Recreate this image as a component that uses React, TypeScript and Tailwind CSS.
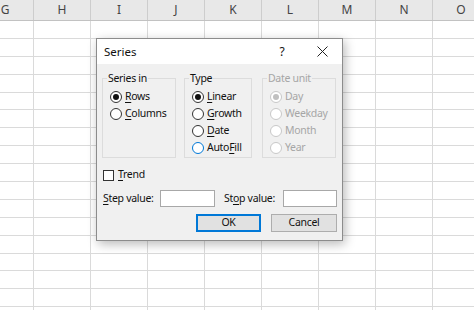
import React from 'react';

const cols = ['G', 'H', 'I', 'J', 'K', 'L', 'M', 'N', 'O'];
const rows = Array.from({ length: 17 }, (_, i) => i);

const Acc: React.FC<{ children: React.ReactNode }> = ({ children }) => (
  <span className="underline underline-offset-[2px] decoration-[1px]">{children}</span>
);

interface RadioProps {
  checked?: boolean;
  disabled?: boolean;
  focus?: boolean;
  children: React.ReactNode;
}

const Radio: React.FC<RadioProps> = ({ checked, disabled, focus, children }) => {
  const ring = disabled ? 'border-[#c8c8c8]' : focus ? 'border-[#0078d7]' : 'border-[#333]';
  return (
    <div className={`flex items-center h-[17px] ${disabled ? 'text-[#a6a6a6]' : 'text-[#111]'}`}>
      <div className={`w-[12px] h-[12px] shrink-0 rounded-full border bg-white flex items-center justify-center ${ring}`}>
        {checked && <div className={`w-[6px] h-[6px] rounded-full ${disabled ? 'bg-[#c0c0c0]' : 'bg-[#111]'}`} />}
      </div>
      <span className="ml-[3px]">{children}</span>
    </div>
  );
};

const Group: React.FC<{ label: string; width: string; disabled?: boolean; children: React.ReactNode }> = ({
  label,
  width,
  disabled,
  children,
}) => (
  <fieldset className={`${width} h-[87px] border border-[#dcdcdc] px-[4px]`}>
    <legend className={`px-[1px] leading-[14px] ${disabled ? 'text-[#a6a6a6]' : 'text-[#111]'}`}>{label}</legend>
    <div className="ml-[3px] mt-[3px]">{children}</div>
  </fieldset>
);

const SeriesDialog: React.FC = () => (
  <div className="absolute left-[96px] top-[38px] w-[247px] h-[203px] border border-[#8c8c8c] bg-[#f0f0f0] shadow-[2px_3px_10px_rgba(0,0,0,0.28)] text-[10.5px] tracking-[-0.3px] text-[#111]">
    {/* title bar */}
    <div className="h-[25px] bg-white flex items-center">
      <span className="pl-[7px] text-[11.5px] tracking-normal">Series</span>
      <span className="ml-auto w-[16px] text-center text-[12px]">?</span>
      <div className="ml-[20px] mr-[8px] w-[24px] flex items-center justify-center">
        <svg width="11" height="11" viewBox="0 0 11 11">
          <path d="M0.5 0.5 L10.5 10.5 M10.5 0.5 L0.5 10.5" stroke="#222" strokeWidth="1" />
        </svg>
      </div>
    </div>

    <div className="pl-[5px] pr-[5px] pt-[7px]">
      <div className="flex">
        <Group label="Series in" width="w-[74px]">
          <Radio checked>
            <Acc>R</Acc>ows
          </Radio>
          <Radio>
            <Acc>C</Acc>olumns
          </Radio>
        </Group>
        <div className="ml-[8px]">
          <Group label="Type" width="w-[68px]">
            <Radio checked>
              <Acc>L</Acc>inear
            </Radio>
            <Radio>
              <Acc>G</Acc>rowth
            </Radio>
            <Radio>
              <Acc>D</Acc>ate
            </Radio>
            <Radio focus>
              Auto<Acc>F</Acc>ill
            </Radio>
          </Group>
        </div>
        <div className="ml-[10px]">
          <Group label="Date unit" width="w-[74px]" disabled>
            <Radio checked disabled>
              Day
            </Radio>
            <Radio disabled>Weekday</Radio>
            <Radio disabled>Month</Radio>
            <Radio disabled>Year</Radio>
          </Group>
        </div>
      </div>

      <div className="flex items-center h-[14px] mt-[10px] ml-[1px]">
        <div className="w-[11px] h-[11px] border border-[#333] bg-white" />
        <span className="ml-[4px]">
          <Acc>T</Acc>rend
        </span>
      </div>

      <div className="flex items-center mt-[8px] ml-[1px]">
        <span className="w-[57px]">
          <Acc>S</Acc>tep value:
        </span>
        <div className="w-[55px] h-[17px] border border-[#a8a8a8] bg-white" />
        <span className="ml-[9px] w-[59px]">
          St<Acc>o</Acc>p value:
        </span>
        <div className="w-[54px] h-[17px] border border-[#a8a8a8] bg-white" />
      </div>

      <div className="flex justify-end mt-[7px]">
        <div className="w-[65px] h-[18px] border-2 border-[#0078d7] bg-[#e1e1e1] flex items-center justify-center">
          OK
        </div>
        <div className="ml-[10px] w-[66px] h-[18px] border border-[#adadad] bg-[#e1e1e1] flex items-center justify-center">
          Cancel
        </div>
      </div>
    </div>
  </div>
);

export default function App() {
  return (
    <div className="relative w-[474px] h-[310px] overflow-hidden bg-white font-['Noto_Sans',sans-serif]">
      <div className="flex -ml-[23px] h-[21px] bg-[#e8e8e8] border-b border-[#c2c2c2]">
        {cols.map((c) => (
          <div
            key={c}
            className="w-[57px] shrink-0 border-r border-[#cdcdcd] flex items-center justify-center text-[12px] text-[#444]"
          >
            {c}
          </div>
        ))}
      </div>
      {rows.map((r) => (
        <div key={r} className="flex -ml-[23px] h-[17.9px] border-b border-[#dadada]">
          {cols.map((c) => (
            <div key={c} className="w-[57px] shrink-0 border-r border-[#dadada]" />
          ))}
        </div>
      ))}
      <SeriesDialog />
    </div>
  );
}
